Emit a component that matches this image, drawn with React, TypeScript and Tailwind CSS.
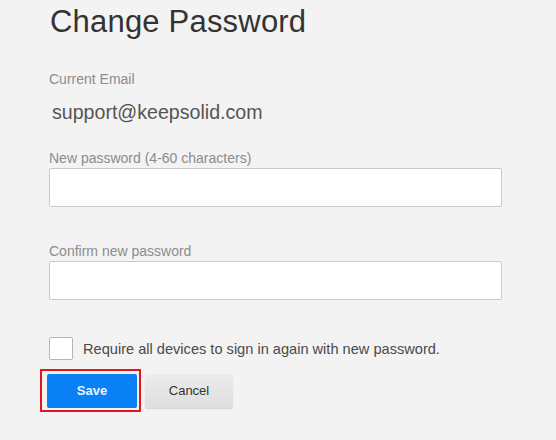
export default function App() {
  return (
    <div
      className="w-[556px] h-[440px] overflow-hidden bg-[#f3f3f3] pl-[49px] pt-[4px]"
      style={{ fontFamily: '"Liberation Sans", Arial, sans-serif' }}
    >
      <h1 className="text-[31px] leading-[36px] text-[#333] ml-[1px] tracking-[0.2px]">Change Password</h1>

      <div className="mt-[31px] text-[14px] leading-[16px] text-[#8c8c8c]">Current Email</div>
      <div className="mt-[14px] ml-[3px] text-[19.6px] leading-[22px] text-[#555]">support@keepsolid.com</div>

      <label className="block mt-[27px] text-[14px] leading-[16px] text-[#8c8c8c]">
        New password (4-60 characters)
      </label>
      <input
        type="password"
        className="block mt-[2px] w-[453px] h-[39px] bg-white border border-[#c9c9c9] rounded-[2px] outline-none"
      />

      <label className="block mt-[36px] text-[14px] leading-[16px] text-[#8c8c8c]">Confirm new password</label>
      <input
        type="password"
        className="block mt-[2px] w-[453px] h-[39px] bg-white border border-[#c9c9c9] rounded-[2px] outline-none"
      />

      <div className="mt-[37px] flex items-center gap-[10px]">
        <div className="w-[24px] h-[23px] bg-white border border-[#b5b5b5] rounded-[2px]" />
        <span className="text-[14.6px] leading-[18px] text-[#4a4a4a]">
          Require all devices to sign in again with new password.
        </span>
      </div>

      <div className="mt-[14px] flex items-center">
        <button className="relative -ml-[2px] w-[90px] h-[34px] rounded-[2px] bg-[#0a80f5] text-[13px] font-bold text-[#eaf4ff]">
          Save
          <span className="absolute -left-[7px] -top-[5px] -right-[4px] -bottom-[4px] border-2 border-[#e8141b] pointer-events-none" />
        </button>
        <button className="ml-[8px] w-[88px] h-[34px] rounded-[2px] bg-gradient-to-b from-[#ececec] to-[#dedede] shadow-[0_1px_1px_rgba(0,0,0,0.12)] text-[13px] text-[#333]">
          Cancel
        </button>
      </div>
    </div>
  );
}
